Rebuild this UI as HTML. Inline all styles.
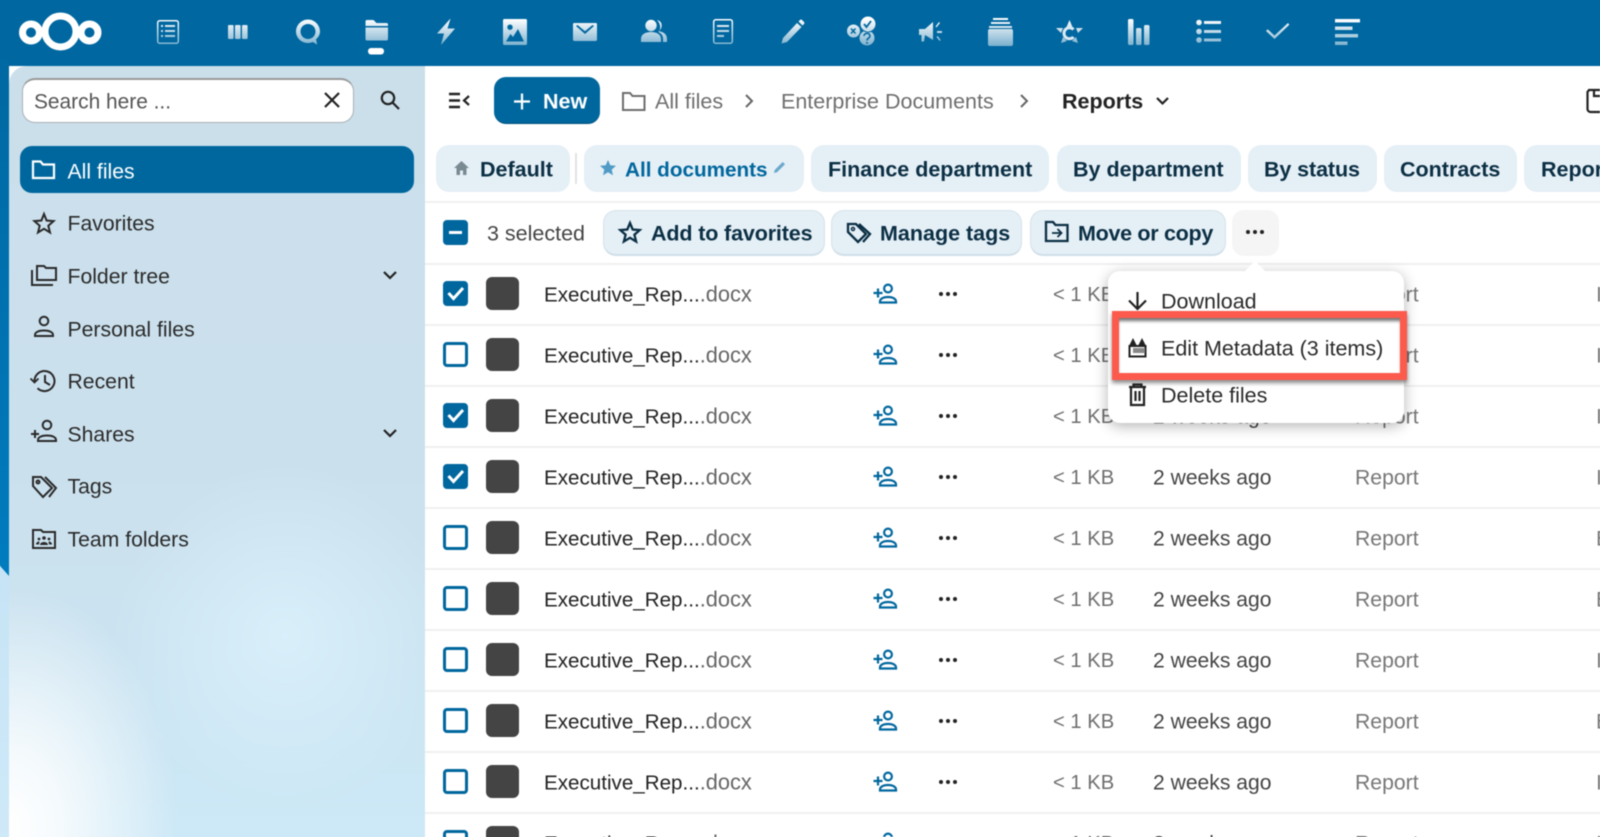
<!DOCTYPE html>
<html><head><meta charset="utf-8"><title>Files</title>
<style>
html,body{margin:0;padding:0;background:#fff}
#p{position:relative;width:1600px;height:837px;overflow:hidden;background:#fff;font-family:"Liberation Sans",sans-serif}
#f{position:absolute;left:0;top:0;width:1600px;height:837px;filter:blur(.4px)}
.a{position:absolute}
.t{position:absolute;white-space:nowrap;line-height:1;transform:translateY(-50%);font-size:21.5px;color:#333}
.b{font-weight:700;color:#0b2f44}
.tab{position:absolute;top:145px;height:47px;background:#e5eff6;border-radius:13px}
.act{position:absolute;top:210px;height:46px;background:#e5eff6;border-radius:13px;border:1px solid #d5e3ea;border-bottom:2px solid #cfdfe8;box-sizing:border-box}
.l{position:absolute;left:425px;right:-6px;height:2px;background:#f0f0f0}
.cb{position:absolute;left:443px;width:25px;height:25px;box-sizing:border-box;border:3px solid #00679e;border-radius:4px;background:#fff}
.cb.on{background:#00679e}
.th{position:absolute;left:486px;width:33px;height:33px;border-radius:6px;background:#444}
.n{left:544px;color:#222;font-size:20.6px}.n span{color:#666;font-size:21.8px}
.s{left:1053px;color:#6e6e6e;font-size:20.2px}.d{left:1153px;color:#444;font-size:21.1px}.r{left:1355px;color:#777;font-size:21.2px}.x{left:1596px;color:#777}
.nav{left:67.5px;color:#2a2a2a;font-size:21.2px}
svg{position:absolute;left:0;top:0;overflow:hidden}
</style></head><body>
<div id="p"><div id="f">
<div class="a" style="left:-6px;top:-6px;width:1612px;height:72px;background:#0067a0"></div>
<div class="a" style="left:-6px;top:60px;width:15px;height:516px;background:linear-gradient(#0068a2,#007cbf)"></div>
<div class="a" style="left:-6px;top:559.3px;width:15px;height:285px;background:linear-gradient(#c6e4f6,#cfe9f8);clip-path:polygon(0 0,100% 16.7px,100% 100%,0 100%)"></div>
<div class="a" style="left:9px;top:66px;width:416px;height:785px;border-top-left-radius:18px;background:radial-gradient(ellipse 170px 240px at 0px 760px,#fff 0%,rgba(255,255,255,.8) 30%,rgba(255,255,255,0) 100%),radial-gradient(circle 170px at 276px 570px,#d9f0fb 0%,rgba(217,240,251,0) 100%),linear-gradient(#cbdfeb 0%,#cbe1ee 60%,#cde9f7 100%)"></div>

<!-- search -->
<div class="a" style="left:22px;top:78px;width:332px;height:45px;box-sizing:border-box;background:#fff;border:1px solid #a8b0b5;border-top:2px solid #999;border-radius:13px"></div>
<div class="t" style="left:34px;top:103px;color:#555;font-size:20.9px">Search here ...</div>

<!-- sidebar nav -->
<div class="a" style="left:20px;top:146px;width:394px;height:47px;border-radius:12px;background:#00679e"></div>
<div class="t nav" style="top:171.5px;color:#fff">All files</div>
<div class="t nav" style="top:224px">Favorites</div>
<div class="t nav" style="top:277px">Folder tree</div>
<div class="t nav" style="top:329.5px">Personal files</div>
<div class="t nav" style="top:382px">Recent</div>
<div class="t nav" style="top:435px">Shares</div>
<div class="t nav" style="top:487px">Tags</div>
<div class="t nav" style="top:540px">Team folders</div>

<!-- breadcrumb -->
<div class="a" style="left:494px;top:77px;width:106px;height:47px;border-radius:12px;background:#00679e;border-bottom:1px solid #00517c;box-sizing:border-box"></div>
<div class="t" style="left:543px;top:102px;color:#fff;font-weight:700">New</div>
<div class="t" style="left:655px;top:102px;color:#6e6e6e">All files</div>
<div class="t" style="left:781px;top:102px;color:#6e6e6e">Enterprise Documents</div>
<div class="t" style="left:1062px;top:102px;color:#222;font-weight:700">Reports</div>

<!-- tabs -->
<div class="tab" style="left:436px;width:134px"></div>
<div class="a" style="left:575px;top:153px;width:2px;height:31px;background:#e3e3e3"></div>
<div class="tab" style="left:584px;width:220px"></div>
<div class="tab" style="left:811px;width:238px"></div>
<div class="tab" style="left:1057px;width:184px"></div>
<div class="tab" style="left:1248px;width:129px"></div>
<div class="tab" style="left:1384px;width:133px"></div>
<div class="tab" style="left:1524px;width:100px"></div>
<div class="t b" style="left:480px;top:170px">Default</div>
<div class="t b" style="left:625px;top:171px;color:#00679e;font-size:20.7px">All documents</div>
<div class="t b" style="left:828px;top:170px">Finance department</div>
<div class="t b" style="left:1073px;top:170px">By department</div>
<div class="t b" style="left:1264px;top:170px;letter-spacing:-.1px">By status</div>
<div class="t b" style="left:1400px;top:170px">Contracts</div>
<div class="t b" style="left:1541px;top:170px">Repor</div>
<div class="l" style="top:201px"></div>

<!-- selection bar -->
<div class="cb on" style="top:220px"></div>
<div class="a" style="left:449px;top:231px;width:13px;height:3px;background:#fff"></div>
<div class="t" style="left:487px;top:234px;color:#444">3 selected</div>
<div class="act" style="left:603px;width:222px"></div>
<div class="act" style="left:831px;width:191px"></div>
<div class="act" style="left:1030px;width:196px"></div>
<div class="a" style="left:1232px;top:210px;width:47px;height:46px;background:#f5f5f5;border-radius:12px"></div>
<div class="t b" style="left:651px;top:234px;letter-spacing:-.14px">Add to favorites</div>
<div class="t b" style="left:880px;top:234px">Manage tags</div>
<div class="t b" style="left:1078px;top:234px;letter-spacing:-.3px">Move or copy</div>

<!-- rows -->
<div class="l" style="top:263px"></div><div class="l" style="top:324px"></div><div class="l" style="top:385px"></div><div class="l" style="top:446px"></div><div class="l" style="top:507px"></div><div class="l" style="top:568px"></div><div class="l" style="top:629px"></div><div class="l" style="top:690px"></div><div class="l" style="top:751px"></div><div class="l" style="top:812px"></div>

<div class="cb on" style="top:281px"></div><div class="th" style="top:277px"></div><div class="t n" style="top:295px">Executive_Rep...<span>.docx</span></div><div class="t s" style="top:295px">&lt; 1 KB</div><div class="t d" style="top:295px">2 weeks ago</div><div class="t r" style="top:295px">Report</div><div class="t x" style="top:295px">I</div>
<div class="cb" style="top:342px"></div><div class="th" style="top:338px"></div><div class="t n" style="top:356px">Executive_Rep...<span>.docx</span></div><div class="t s" style="top:356px">&lt; 1 KB</div><div class="t d" style="top:356px">2 weeks ago</div><div class="t r" style="top:356px">Report</div><div class="t x" style="top:356px">I</div>
<div class="cb on" style="top:403px"></div><div class="th" style="top:399px"></div><div class="t n" style="top:417px">Executive_Rep...<span>.docx</span></div><div class="t s" style="top:417px">&lt; 1 KB</div><div class="t d" style="top:417px">2 weeks ago</div><div class="t r" style="top:417px">Report</div><div class="t x" style="top:417px">I</div>
<div class="cb on" style="top:464px"></div><div class="th" style="top:460px"></div><div class="t n" style="top:478px">Executive_Rep...<span>.docx</span></div><div class="t s" style="top:478px">&lt; 1 KB</div><div class="t d" style="top:478px">2 weeks ago</div><div class="t r" style="top:478px">Report</div><div class="t x" style="top:478px">I</div>
<div class="cb" style="top:525px"></div><div class="th" style="top:521px"></div><div class="t n" style="top:539px">Executive_Rep...<span>.docx</span></div><div class="t s" style="top:539px">&lt; 1 KB</div><div class="t d" style="top:539px">2 weeks ago</div><div class="t r" style="top:539px">Report</div><div class="t x" style="top:539px">E</div>
<div class="cb" style="top:586px"></div><div class="th" style="top:582px"></div><div class="t n" style="top:600px">Executive_Rep...<span>.docx</span></div><div class="t s" style="top:600px">&lt; 1 KB</div><div class="t d" style="top:600px">2 weeks ago</div><div class="t r" style="top:600px">Report</div><div class="t x" style="top:600px">E</div>
<div class="cb" style="top:647px"></div><div class="th" style="top:643px"></div><div class="t n" style="top:661px">Executive_Rep...<span>.docx</span></div><div class="t s" style="top:661px">&lt; 1 KB</div><div class="t d" style="top:661px">2 weeks ago</div><div class="t r" style="top:661px">Report</div><div class="t x" style="top:661px">I</div>
<div class="cb" style="top:708px"></div><div class="th" style="top:704px"></div><div class="t n" style="top:722px">Executive_Rep...<span>.docx</span></div><div class="t s" style="top:722px">&lt; 1 KB</div><div class="t d" style="top:722px">2 weeks ago</div><div class="t r" style="top:722px">Report</div><div class="t x" style="top:722px">E</div>
<div class="cb" style="top:769px"></div><div class="th" style="top:765px"></div><div class="t n" style="top:783px">Executive_Rep...<span>.docx</span></div><div class="t s" style="top:783px">&lt; 1 KB</div><div class="t d" style="top:783px">2 weeks ago</div><div class="t r" style="top:783px">Report</div><div class="t x" style="top:783px">I</div>
<div class="cb" style="top:830px"></div><div class="th" style="top:826px"></div><div class="t n" style="top:844px">Executive_Rep...<span>.docx</span></div><div class="t s" style="top:844px">&lt; 1 KB</div><div class="t d" style="top:844px">2 weeks ago</div><div class="t r" style="top:844px">Report</div><div class="t x" style="top:844px">I</div>

<!-- icon layer -->
<svg width="1600" height="837" viewBox="0 0 1600 837">
<defs>
<linearGradient id="g" gradientUnits="userSpaceOnUse" x1="0" y1="3" x2="0" y2="29"><stop offset="0" stop-color="#fff"/><stop offset="1" stop-color="#fff" stop-opacity=".5"/></linearGradient>
<g id="sh" fill="none" stroke="#00679e" stroke-width="2.2"><circle cx="3" cy="-5.5" r="3.9"/><path d="M-3 8.5v-1c0-2.500 3-4.500 8-4.500s8 2 8 4.500v1Z" transform="translate(-2,0)"/><path d="M-11.500 -1h9M-7 -5.500v9"/></g>
<g id="dt" fill="#222"><circle cx="-7" r="2"/><circle r="2"/><circle cx="7" r="2"/></g>
<path id="ck" d="M-7 0l5 5.500L7.500-5" fill="none" stroke="#fff" stroke-width="3"/>
</defs>

<!-- logo -->
<g fill="none" stroke="#fff" stroke-width="7"><circle cx="60.5" cy="31.5" r="15.5"/><circle cx="31" cy="32.5" r="8.5"/><circle cx="89.5" cy="32.5" r="8.5"/></g>

<!-- header apps -->
<g fill="url(#g)" stroke="none">
<g transform="translate(152,16)"><rect x="5.7" y="4.7" width="20.6" height="22.6" rx="2" fill="none" stroke="url(#g)" stroke-width="1.5"/><path d="M9 9h2v2H9zM13 9h10v2H13zM9 14h2v2H9zM13 14h10v2H13zM9 19h2v2H9zM13 19h10v2H13z"/></g>
<g transform="translate(222,16)"><rect x="6" y="9" width="5.6" height="14" rx="1"/><rect x="13" y="9" width="5.6" height="14" rx="1"/><rect x="20" y="9" width="5.6" height="14" rx="1"/></g>
<g transform="translate(292,16)"><path fill-rule="evenodd" d="M16 3.5C9.5 3.5 4 9 4 15.5S9.5 27 16 27c1.7 0 3.4-.4 4.9-1l4.3 2.6-1.2-5.3c2.500-2 4-5 4-7.800C28 9 22.500 3.500 16 3.500ZM16 8c4.200 0 7.500 3.300 7.500 7.500S20.200 23 16 23 8.500 19.700 8.500 15.500 11.800 8 16 8Z"/></g>
<g transform="translate(360.5,16)"><path d="M5 10V5.500C5 4.500 5.500 4 6.500 4H13l3 3h10c1 0 1.500.7 1.500 1.500V10Z"/><path d="M5 11.500h22.500V23c0 1-.7 1.500-1.500 1.500H6.500C5.500 24.500 5 24 5 23Z"/></g>
<rect x="368" y="48" width="16" height="6.5" rx="3" fill="#fff"/>
<g transform="translate(430,16)"><path d="M20.500 2.500 7 17.500H14L11 29 25 12.500H17.500Z"/></g>
<g transform="translate(499,16)"><path fill-rule="evenodd" d="M5.500 3h21c1 0 1.500.5 1.500 1.500v23c0 1-.5 1.500-1.500 1.500h-21C4.500 29 4 28.500 4 27.500v-23C4 3.500 4.500 3 5.500 3ZM11 8.500a2.700 2.700 0 1 0 0 5.400 2.700 2.700 0 0 0 0-5.400ZM19 13l-5 8-2.500-3-4.500 7.500h18Z"/></g>
<g transform="translate(569,16)"><path fill-rule="evenodd" d="M5 7h22c.7 0 1 .5 1 1.200V23.500c0 .8-.5 1.500-1.500 1.500h-21C4.500 25 4 24.300 4 23.500V8.200C4 7.500 4.300 7 5 7ZM7 10l9 8 9-8-1.500-1L16 15.300 8.500 9Z"/></g>
<g transform="translate(638,16)"><circle cx="13" cy="9.5" r="5.7"/><path d="M3 26v-3c0-4.500 4-7 10-7s10 2.500 10 7v3Z"/><path d="M19 4c3.500 1 4.700 3 4.700 5.500s-1 4.500-3.500 5.500c6 1 8.800 3.500 8.800 8v3h-4v-3c0-3-1-5-4.500-7 1.500-2 2-4 1.500-6.500S20.500 5.500 19 4Z"/></g>
<g transform="translate(707,16)"><rect x="6.7" y="3.7" width="18.6" height="23.6" rx="2" fill="none" stroke="url(#g)" stroke-width="1.5"/><path d="M10 9h12v2H10zM10 14h12v2H10zM10 19h7v2h-7z"/></g>
<g transform="translate(776,16)"><path d="M21 7l4.500 4L11 26l-5.500 1.500L7 22ZM22.500 5.500l1.500-1.500c.6-.6 1.500-.6 2 0l2 2c.6.6.6 1.400 0 2l-1.500 1.500Z"/></g>
<g transform="translate(846,16)" stroke="#0067a0" stroke-width="1"><circle cx="7.5" cy="15" r="7"/><circle cx="21" cy="22" r="8"/><circle cx="22" cy="8" r="8"/></g>
<g transform="translate(915,16)"><path d="M4 13h6l8-7v18l-8-5-1 6.500H6.500V19H4Z"/><path d="M20.500 10.500 24 6l1 1-3.500 4.500ZM22 15h5v2h-5ZM21.500 21l1.200-1 3 4-1 1Z"/></g>
<g transform="translate(985,16)"><path d="M8 2h15v2H8zM6 6h19v2H6zM4 10h23v2H4z"/><rect x="3" y="13" width="25" height="17" rx="2"/></g>
<g transform="translate(1053.5,16)"><path d="M16 4l3 7h-6ZM2.500 12h7l-2 5ZM29.500 12h-7l2 5ZM7.500 27l2-6 4 4ZM24.500 27l-2-6-4 4Z"/></g>
<g transform="translate(1123,16)"><rect x="5" y="3" width="5.5" height="26" rx="1.5"/><rect x="13" y="12" width="5.5" height="17" rx="1.5"/><rect x="21" y="9" width="5.5" height="20" rx="1.5"/></g>
<g transform="translate(1192,16)"><circle cx="7" cy="6.5" r="2.8"/><circle cx="7" cy="15.5" r="2.8"/><circle cx="7" cy="24" r="2.8"/><rect x="12" y="5" width="17" height="3"/><rect x="12" y="14" width="17" height="3"/><rect x="12" y="22.5" width="17" height="3"/></g>
<g transform="translate(1261,16)"><path d="M5 15l1.700-1.800 6.800 6.300L27 7l1.300 1.800L13.500 23Z"/></g>
<g transform="translate(1331,16)"><rect x="4" y="3" width="25" height="3.5"/><rect x="4" y="10.5" width="17.5" height="3.5"/><rect x="4" y="18" width="23" height="3.5"/><rect x="4" y="25.5" width="12.5" height="3.5"/></g>
</g>
<!-- forms marks -->
<g fill="none" stroke="#0067a0" stroke-width="1.8"><path d="M864 24l2.500 3 4.500-6"/><path d="M851 28.500l4.500 5M855.500 28.500l-4.500 5" stroke-width="1.5"/><path d="M864 36c0-3.500 6-3.500 6 0 0 2-3 2-3 4.500M867 42v1.800" stroke-width="1.6"/></g>
<path d="M1073.500 29.500a5.500 5.500 0 1 0 0 7.500" fill="none" stroke="#dbe9f3" stroke-width="3"/>

<!-- search icons -->
<path d="M325 93l14 14M339 93l-14 14" stroke="#222" stroke-width="2.2" fill="none"/>
<g fill="none" stroke="#222" stroke-width="2.2"><circle cx="388" cy="98" r="6.2"/><path d="M392.500 102.500l6.500 6.500"/></g>

<!-- sidebar icons -->
<g fill="none" stroke="#fff" stroke-width="2.2"><path d="M33 161.500h7.500l2.500 3h11v13.500H33Z"/></g>
<g fill="none" stroke="#2a2a2a" stroke-width="2">
<path d="M44 214l2.600 6.500 7 .6-5.300 4.600 1.700 6.800-6-3.700-6 3.700 1.700-6.800-5.300-4.600 7-.6Z"/>
<path d="M37 266h7l2 2h10v12H37ZM32 270v15h21"/>
<circle cx="44" cy="321" r="4.3"/><path d="M35 336v-1c0-3 4-4.500 9-4.500s9 1.500 9 4.500v1Z"/>
<path d="M34.500 381a10 10 0 1 1 3 7.200M45 375v7l5 3"/><path d="M30.500 378.500l4 4 4-4" stroke-width="1.8"/>
<circle cx="47" cy="425" r="4.3"/><path d="M38 441v-1c0-3 4-4.500 9-4.500s9 1.500 9 4.500v1ZM31 434h8M35 430v8"/>
<path d="M33 477h8l11 11-9 9-10-11ZM45 477l11 11-7 9"/><circle cx="38" cy="482" r="1.5"/>
<path d="M33 530h8l2 2h12v16H33Z"/>
</g>
<g fill="#2a2a2a"><circle cx="44" cy="538" r="1.8"/><circle cx="39" cy="539" r="1.4"/><circle cx="49" cy="539" r="1.4"/><path d="M40 545c0-4 8-4 8 0ZM36 544.500c0-3 3-3 3.500-3l-.5 3ZM52 544.500c0-3-3-3-3.500-3l.5 3Z"/></g>
<path d="M384 272l6 6 6-6M384 430l6 6 6-6" fill="none" stroke="#222" stroke-width="2.2"/>

<!-- breadcrumb icons -->
<path d="M449 94h11M449 100.500h11M449 107h11" stroke="#222" stroke-width="2.4"/>
<path d="M469 96l-5 4.500 5 4.500" fill="none" stroke="#222" stroke-width="2.2"/>
<path d="M514 101.500h16M522 93.500v16" stroke="#fff" stroke-width="2.2"/>
<path d="M623 93h7l2.500 3h12v14h-21.500Z" fill="none" stroke="#6e6e6e" stroke-width="2"/>
<path d="M746 95l6 6-6 6M1021 95l6 6-6 6" fill="none" stroke="#666" stroke-width="2"/>
<path d="M1157 98l5.500 5.500 5.500-5.500" fill="none" stroke="#222" stroke-width="2.2"/>
<path d="M1601 90h-12l-1.500 2v17a3 3 0 0 0 3 3h11M1594 90v6h7" fill="none" stroke="#222" stroke-width="2.2"/>

<!-- tab icons -->
<path d="M461.500 161l7.500 7h-2.500v7h-3.500v-4.500h-3v4.500h-3.500v-7H454Z" fill="#7a8a92"/>
<path d="M608 160l2.300 5.300 5.700.5-4.300 3.800 1.300 5.600-5-3-5 3 1.300-5.600-4.300-3.800 5.700-.5Z" fill="#4f9bc6"/>
<path d="M774 173l.7-3 8-8 2.300 2.300-8 8Z" fill="#6aa8cc"/>

<!-- action icons -->
<g fill="none" stroke="#0b2f44" stroke-width="2.3">
<path d="M630 223l2.700 6.500 7 .6-5.300 4.600 1.700 6.800-6.100-3.700-6.100 3.700 1.700-6.800-5.300-4.600 7-.6Z"/>
<path d="M848 224h8l10 10-8 8-10-10ZM859 224l11 10-7 8"/><circle cx="853" cy="229" r="1.5" stroke-width="1.5"/>
<path d="M1046 222h7l2.500 3h12v16h-21.500Z"/><path d="M1052 233h9M1057.500 229l4 4-4 4" stroke-width="1.8"/>
</g>
<use href="#dt" x="1255" y="232"/>

<!-- checks -->
<use href="#ck" x="455.5" y="293"/><use href="#ck" x="455.5" y="415"/><use href="#ck" x="455.5" y="476"/>

<!-- row icons -->
<use href="#sh" x="885" y="294"/><use href="#dt" x="948" y="294"/>
<use href="#sh" x="885" y="355"/><use href="#dt" x="948" y="355"/>
<use href="#sh" x="885" y="416"/><use href="#dt" x="948" y="416"/>
<use href="#sh" x="885" y="477"/><use href="#dt" x="948" y="477"/>
<use href="#sh" x="885" y="538"/><use href="#dt" x="948" y="538"/>
<use href="#sh" x="885" y="599"/><use href="#dt" x="948" y="599"/>
<use href="#sh" x="885" y="660"/><use href="#dt" x="948" y="660"/>
<use href="#sh" x="885" y="721"/><use href="#dt" x="948" y="721"/>
<use href="#sh" x="885" y="782"/><use href="#dt" x="948" y="782"/>
<use href="#sh" x="885" y="843"/><use href="#dt" x="948" y="843"/>
</svg>

<!-- popup -->
<div class="a" style="left:1108px;top:271px;width:296px;height:152px;background:#fff;border-radius:12px;box-shadow:0 3px 14px rgba(0,0,0,.3)"></div>
<div class="a" style="left:1243px;top:261px;width:24px;height:12px;background:#fff;clip-path:polygon(50% 0,100% 100%,0 100%)"></div>
<div class="t" style="left:1161px;top:302px;color:#2a2a2a">Download</div>
<div class="t" style="left:1161px;top:349px;color:#2a2a2a">Edit Metadata (3 items)</div>
<div class="t" style="left:1161px;top:396px;color:#2a2a2a">Delete files</div>
<div class="a" style="left:1112px;top:311px;width:295px;height:69px;box-sizing:border-box;border:7px solid #fb5a4c;box-shadow:0 3px 4px rgba(0,0,0,.45),inset 0 4px 3px -1px rgba(0,0,0,.55)"></div>
<svg width="1600" height="837" viewBox="0 0 1600 837">
<g fill="none" stroke="#222" stroke-width="2.2">
<path d="M1137.500 292v17M1129 300.500l8.500 8.500 8.500-8.500"/>
<path d="M1129.500 346h16v10.500h-16Z" stroke-width="2"/>
<path d="M1129 387h17M1133.500 387v-2.500h8v2.500M1131 387v18h13v-18M1135.500 391v10M1139.500 391v10"/>
</g>
<path d="M1129 346l4-8 4 8ZM1138 346l4-8 4 8Z" fill="#222"/>
<path d="M1133 348h12v5h-12Z" fill="#888"/>
</svg>
</div></div>
</body></html>
